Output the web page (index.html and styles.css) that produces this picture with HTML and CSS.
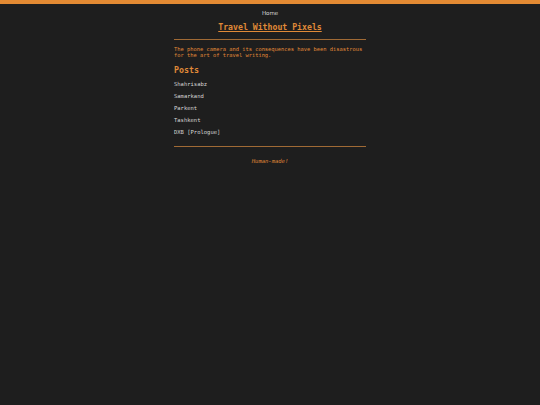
FILE: index.html
```html
<!DOCTYPE html>
<html>
<head>
<meta charset="utf-8">
<link rel="stylesheet" href="styles.css">
</head>
<body>
<div class="topbar"></div>
<nav class="nav"><a href="#">Home</a></nav>
<main class="page">
  <h1 class="title"><a href="#">Travel Without Pixels</a></h1>
  <div class="rule"></div>
  <p class="desc">The phone camera and its consequences have been disastrous for the art of travel writing.</p>
  <h2 class="posts">Posts</h2>
  <ul class="list">
    <li><a href="#">Shahrisabz</a></li>
    <li><a href="#">Samarkand</a></li>
    <li><a href="#">Parkent</a></li>
    <li><a href="#">Tashkent</a></li>
    <li><a href="#">DXB [Prologue]</a></li>
  </ul>
  <div class="rule bottom"></div>
  <footer class="foot">Human-made!</footer>
</main>
</body>
</html>
```

FILE: styles.css
```css
html, body {
  margin: 0;
  padding: 0;
  background: #1e1e1e;
  height: 100%;
}
body {
  font-family: "DejaVu Sans Mono", monospace;
  color: #dcdcdc;
}
.topbar {
  height: 4px;
  background: #e38a33;
}
.nav {
  text-align: center;
  padding-top: 5px;
  font-family: "DejaVu Sans", sans-serif;
  font-size: 5.5px;
  line-height: 8px;
}
.nav a {
  color: #dcdcdc;
  text-decoration: none;
}
.page {
  width: 192px;
  margin: 0 auto;
}
.title {
  margin: 4px 0 0;
  text-align: center;
  font-size: 8.2px;
  line-height: 12px;
  font-weight: bold;
}
.title a {
  color: #e08a38;
}
.rule {
  height: 1px;
  background: #a06a35;
  margin: 6px 0 0;
}
.desc {
  margin: 6px 0 0;
  color: #e08a38;
  font-size: 5.4px;
  line-height: 6.2px;
}
.posts {
  margin: 6px 0 0;
  color: #e08a38;
  font-size: 8.3px;
  line-height: 12px;
}
.list {
  list-style: none;
  margin: 3px 0 0;
  padding: 0;
  font-size: 5.5px;
  line-height: 11.8px;
}
.list a {
  color: #d6d6d6;
  text-decoration: none;
}
.rule.bottom {
  margin-top: 8px;
}
.foot {
  text-align: center;
  color: #e08a38;
  font-style: italic;
  font-size: 5.5px;
  line-height: 8px;
  margin-top: 10px;
}
```
